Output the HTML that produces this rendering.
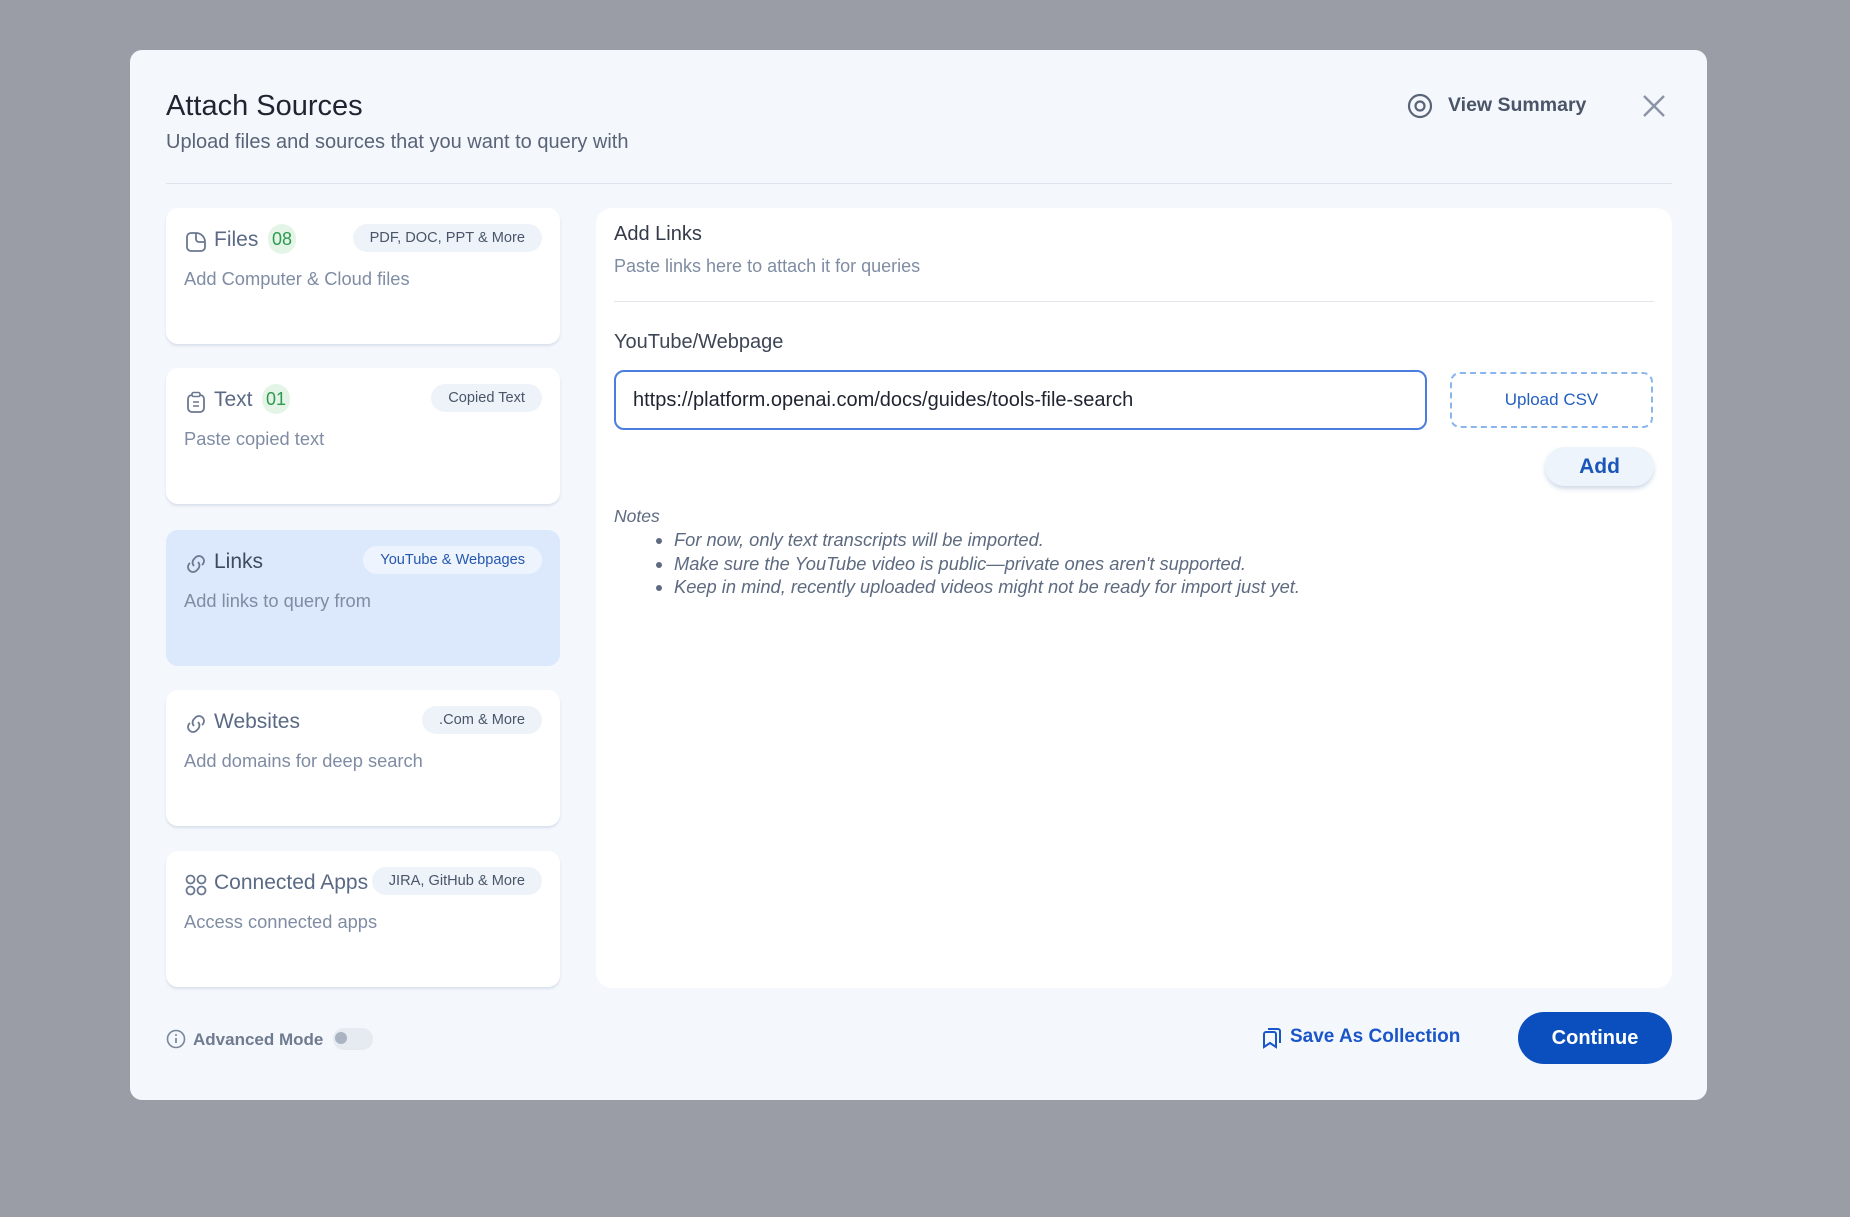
<!DOCTYPE html>
<html><head><meta charset="utf-8"><style>
*{box-sizing:border-box;margin:0;padding:0}
body{width:1850px;height:1217px;background:#9a9da6;font-family:"Liberation Sans",sans-serif;position:relative;overflow:hidden}
.abs{position:absolute}
.modal{left:130px;top:50px;width:1577px;height:1050px;background:#f4f7fc;border-radius:12px}
.card{position:absolute;left:166px;width:394px;height:136px;background:#fff;border-radius:12px;box-shadow:0 2px 2px rgba(200,210,225,.6)}
.card .ic{position:absolute;left:18px;top:22px}
.card .t{position:absolute;left:48px;top:20px;font-size:21px;color:#5a6a85}
.card .d{position:absolute;left:18px;top:60px;font-size:18.3px;color:#7f8ca3}
.pill{position:absolute;right:18px;top:16px;height:28px;border-radius:14px;background:#eef3fa;font-size:14.6px;color:#4a5568;padding:0 17px;line-height:28px}
.badge{position:absolute;top:16px;height:30px;border-radius:15px;background:#e4f5e8;color:#2e9a4f;font-size:18px;line-height:30px;padding:0 4px}
.notes li{margin-left:60px;font-size:18.3px;line-height:23.5px;color:#5d6a80;font-style:italic}
</style></head><body>
<div class="abs modal"></div>
<div class="abs" style="left:166px;top:90px;font-size:29px;color:#1f2430">Attach Sources</div>
<div class="abs" style="left:166px;top:131px;font-size:20px;color:#5a6478">Upload files and sources that you want to query with</div>
<svg class="abs" style="left:1406px;top:93px" width="28" height="26" viewBox="0 0 28 26"><circle cx="14" cy="13" r="11" fill="none" stroke="#5a6478" stroke-width="2.2"/><circle cx="14" cy="13" r="4.5" fill="none" stroke="#5a6478" stroke-width="2.2"/></svg>
<div class="abs" style="left:1448px;top:94px;font-size:19.5px;color:#4a5568;font-weight:bold">View Summary</div>
<svg class="abs" style="left:1641px;top:93px" width="26" height="26" viewBox="0 0 26 26"><path d="M3 3L23 23M23 3L3 23" stroke="#8a94a6" stroke-width="2.4"/></svg>
<div class="abs" style="left:166px;top:183px;width:1506px;height:1px;background:#dde3ec"></div>

<div class="card" style="top:208px">
<svg class="ic" width="24" height="24" viewBox="0 0 24 24"><path d="M12 3H7a4 4 0 0 0-4 4v10a4 4 0 0 0 4 4h10a4 4 0 0 0 4-4v-5A9 9 0 0 0 12 3z M12 3v6a3 3 0 0 0 3 3h6" fill="none" stroke="#6a7890" stroke-width="1.8"/></svg>
<div class="t">Files</div><div class="badge" style="left:102px">08</div>
<div class="pill">PDF, DOC, PPT &amp; More</div>
<div class="d">Add Computer &amp; Cloud files</div></div>
<div class="card" style="top:368px">
<svg class="ic" width="24" height="24" viewBox="0 0 24 24"><rect x="4" y="5" width="16" height="17" rx="4" fill="none" stroke="#6a7890" stroke-width="1.8"/><rect x="8" y="2.5" width="8" height="4" rx="1.5" fill="#fff" stroke="#6a7890" stroke-width="1.6"/><path d="M9 12h6M9 16h6" stroke="#6a7890" stroke-width="1.6"/></svg>
<div class="t">Text</div><div class="badge" style="left:96px">01</div>
<div class="pill">Copied Text</div>
<div class="d">Paste copied text</div></div>
<div class="card" style="top:530px;background:#dce8fb;box-shadow:none">
<svg class="ic" width="24" height="24" viewBox="0 0 24 24"><path d="M10 14a5 5 0 0 1 0-7l2-2a5 5 0 0 1 7 7l-1 1M14 10a5 5 0 0 1 0 7l-2 2a5 5 0 0 1-7-7l1-1" fill="none" stroke="#6a7890" stroke-width="1.8"/></svg>
<div class="t" style="color:#3e4a60">Links</div>
<div class="pill" style="background:#eef4fd;color:#2458b0">YouTube &amp; Webpages</div>
<div class="d">Add links to query from</div></div>
<div class="card" style="top:690px">
<svg class="ic" width="24" height="24" viewBox="0 0 24 24"><path d="M10 14a5 5 0 0 1 0-7l2-2a5 5 0 0 1 7 7l-1 1M14 10a5 5 0 0 1 0 7l-2 2a5 5 0 0 1-7-7l1-1" fill="none" stroke="#6a7890" stroke-width="1.8"/></svg>
<div class="t">Websites</div>
<div class="pill">.Com &amp; More</div>
<div class="d">Add domains for deep search</div></div>
<div class="card" style="top:851px">
<svg class="ic" width="24" height="24" viewBox="0 0 24 24"><circle cx="6.5" cy="6.5" r="4" fill="none" stroke="#6a7890" stroke-width="1.8"/><circle cx="17.5" cy="6.5" r="4" fill="none" stroke="#6a7890" stroke-width="1.8"/><circle cx="6.5" cy="17.5" r="4" fill="none" stroke="#6a7890" stroke-width="1.8"/><circle cx="17.5" cy="17.5" r="4" fill="none" stroke="#6a7890" stroke-width="1.8"/></svg>
<div class="t">Connected Apps</div>
<div class="pill">JIRA, GitHub &amp; More</div>
<div class="d">Access connected apps</div></div>

<div class="abs" style="left:596px;top:208px;width:1076px;height:780px;background:#fff;border-radius:16px"></div>
<div class="abs" style="left:614px;top:223px;font-size:20px;color:#333a48">Add Links</div>
<div class="abs" style="left:614px;top:256px;font-size:18px;color:#7f8ca3">Paste links here to attach it for queries</div>
<div class="abs" style="left:614px;top:301px;width:1040px;height:1px;background:#e2e6ec"></div>
<div class="abs" style="left:614px;top:331px;font-size:20px;color:#3e4656">YouTube/Webpage</div>
<div class="abs" style="left:614px;top:370px;width:813px;height:60px;border:2px solid #4a7de0;border-radius:10px;font-size:20px;color:#1f2430;padding-left:17px;line-height:56px">https://platform.openai.com/docs/guides/tools-file-search</div>
<div class="abs" style="left:1450px;top:372px;width:203px;height:56px;border:2px dashed #8ab6ee;border-radius:10px;font-size:17px;color:#2360c0;text-align:center;line-height:52px">Upload CSV</div>
<div class="abs" style="left:1545px;top:447px;width:109px;height:39px;border-radius:20px;background:#eef4fc;box-shadow:0 3px 4px rgba(170,185,210,.5);font-size:21px;font-weight:bold;color:#1a56b8;text-align:center;line-height:39px">Add</div>
<div class="abs" style="left:614px;top:506px;font-size:17.5px;color:#5d6a80;font-style:italic">Notes</div>
<ul class="abs notes" style="left:614px;top:528px;width:1050px">
<li>For now, only text transcripts will be imported.</li>
<li>Make sure the YouTube video is public—private ones aren't supported.</li>
<li>Keep in mind, recently uploaded videos might not be ready for import just yet.</li>
</ul>

<svg class="abs" style="left:166px;top:1029px" width="20" height="20" viewBox="0 0 20 20"><circle cx="10" cy="10" r="8.5" fill="none" stroke="#7a869b" stroke-width="1.6"/><path d="M10 9v5" stroke="#7a869b" stroke-width="1.8"/><circle cx="10" cy="6" r="1" fill="#7a869b"/></svg>
<div class="abs" style="left:193px;top:1030px;font-size:17px;font-weight:bold;color:#6f7b90">Advanced Mode</div>
<div class="abs" style="left:333px;top:1028px;width:40px;height:22px;border-radius:11px;background:#e6eaf1"></div>
<div class="abs" style="left:335px;top:1032px;width:12px;height:12px;border-radius:6px;background:#aab3c2"></div>
<svg class="abs" style="left:1260px;top:1026px" width="24" height="24" viewBox="0 0 24 24"><path d="M4 8a2 2 0 0 1 2-2h8a2 2 0 0 1 2 2v13l-6-4-6 4z M8 3h10a2 2 0 0 1 2 2v12" fill="none" stroke="#1a56c8" stroke-width="2"/></svg>
<div class="abs" style="left:1290px;top:1026px;font-size:19px;color:#1a56c8;font-weight:bold">Save As Collection</div>
<div class="abs" style="left:1518px;top:1012px;width:154px;height:52px;border-radius:26px;background:#0b4fbe;color:#fff;font-size:20px;font-weight:bold;text-align:center;line-height:52px">Continue</div>
</body></html>
